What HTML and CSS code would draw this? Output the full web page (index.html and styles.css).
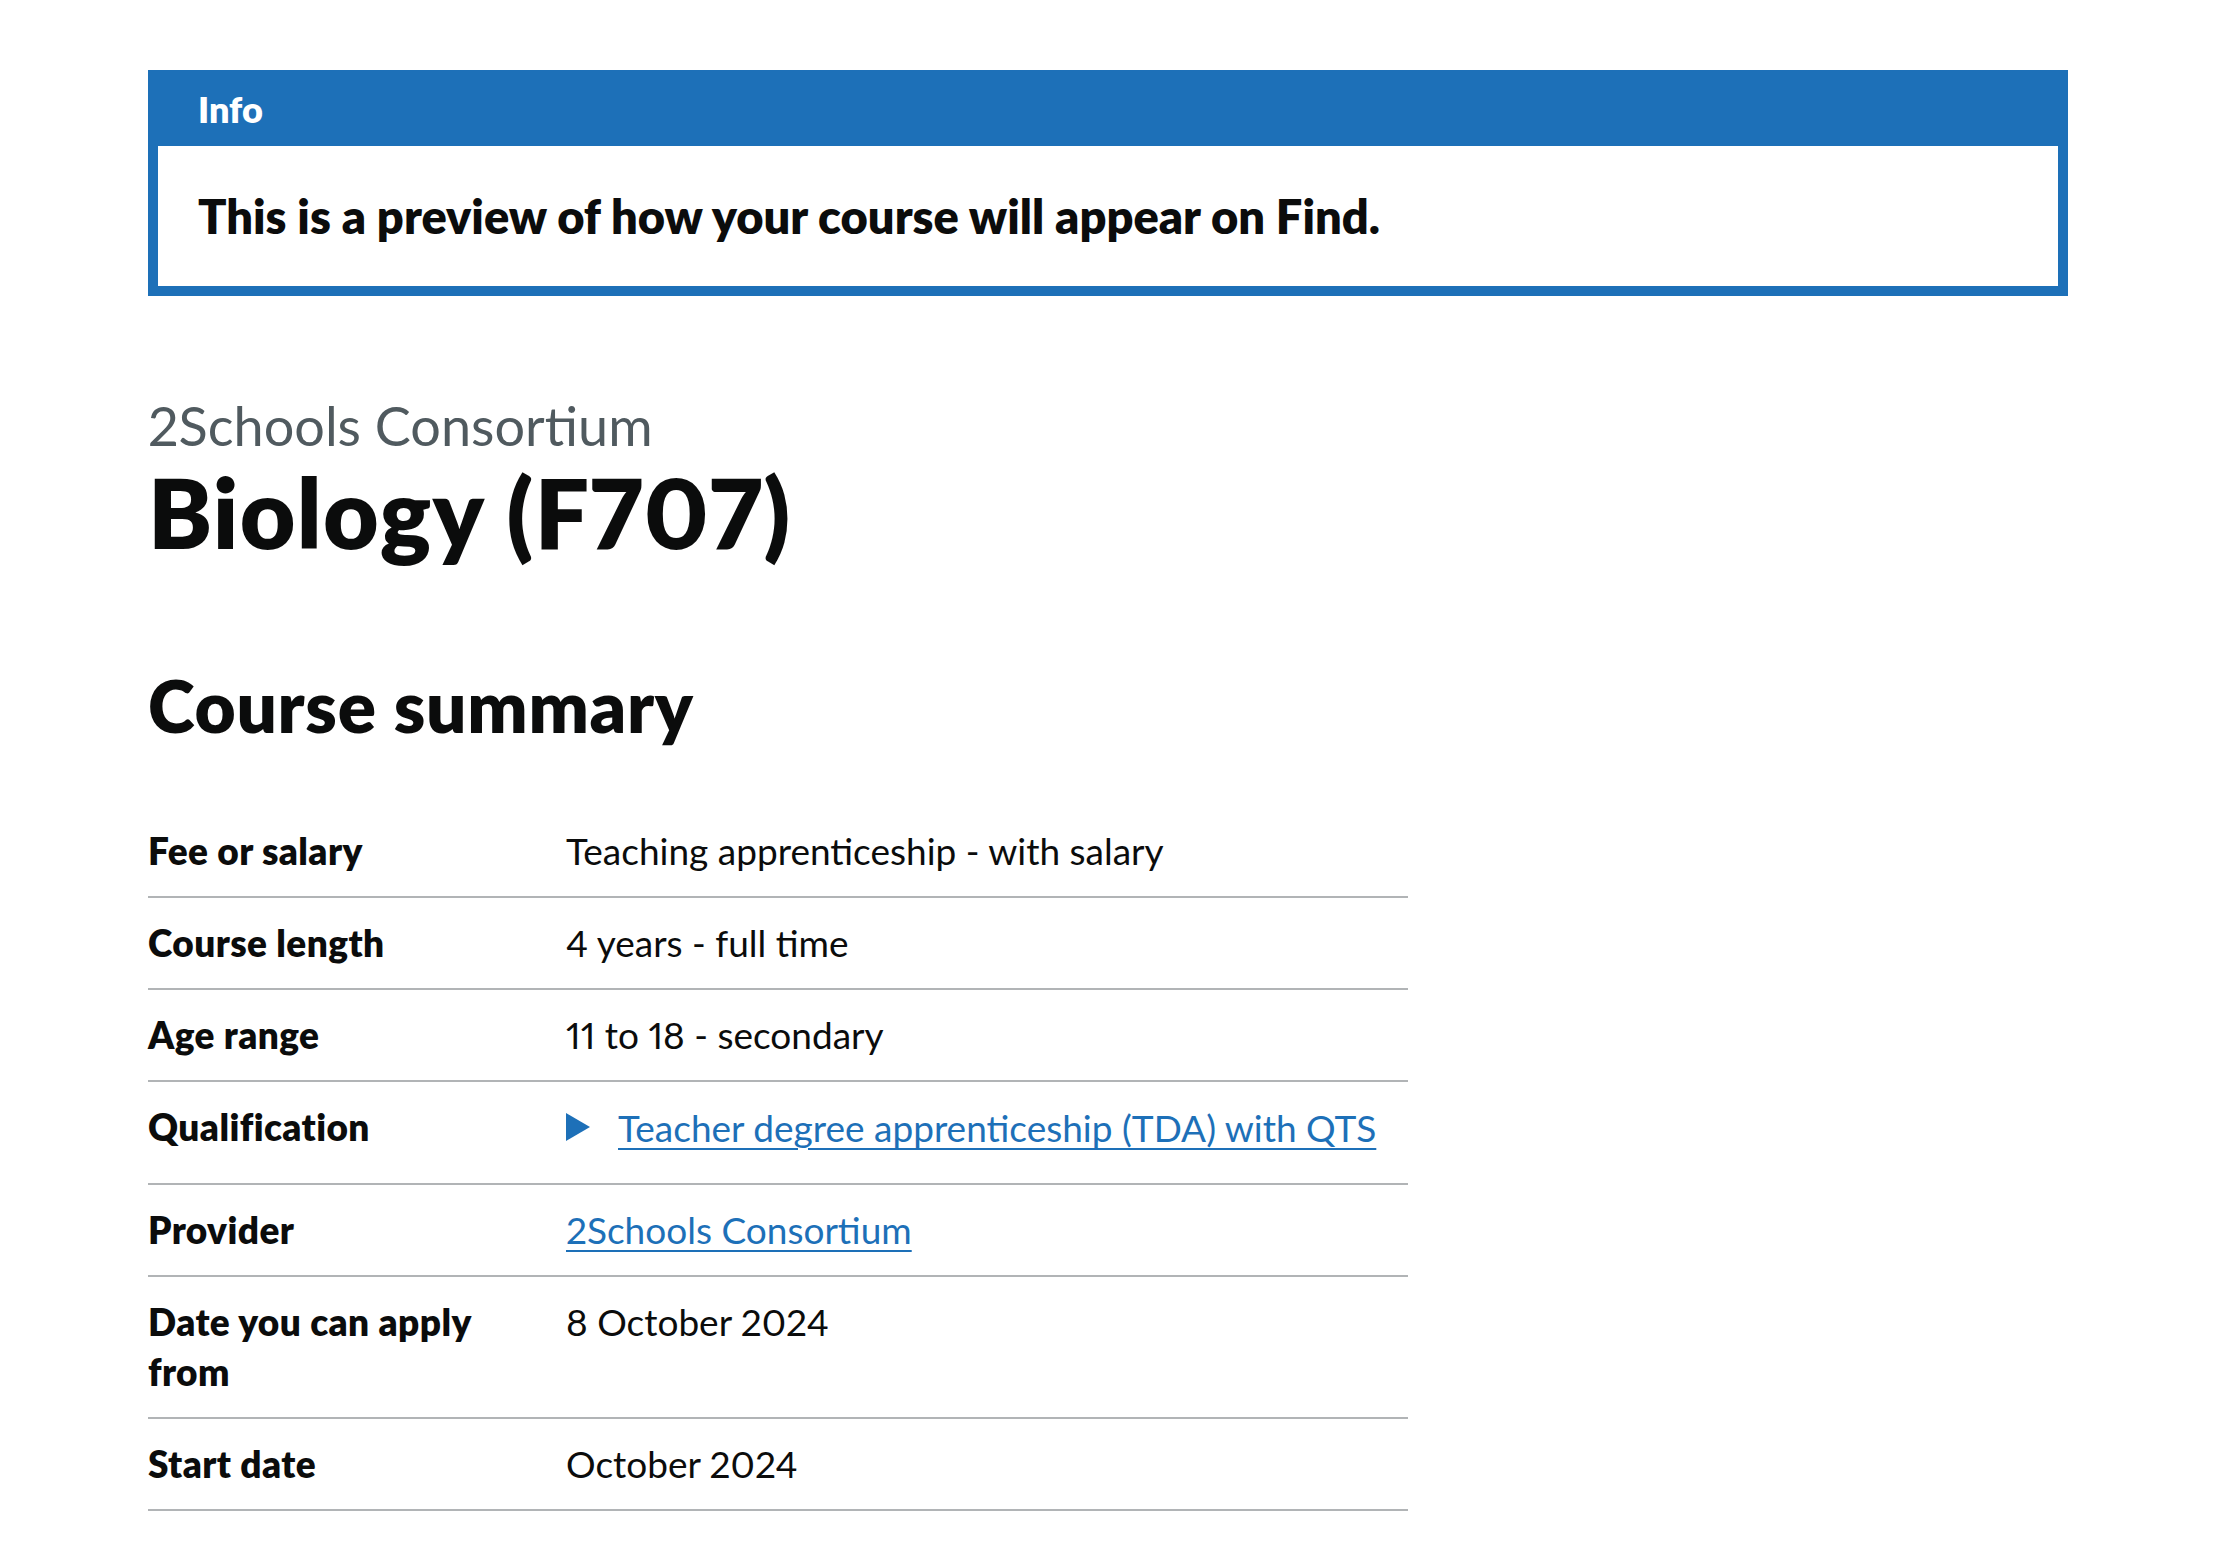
FILE: index.html
```html
<!DOCTYPE html>
<html lang="en">
<head>
<meta charset="utf-8">
<title>Biology (F707) - Preview</title>
<link rel="stylesheet" href="styles.css">
</head>
<body>
<main class="page">
  <div class="banner" role="region" aria-labelledby="banner-title">
    <div class="banner-header">
      <h2 class="banner-title" id="banner-title">Info</h2>
    </div>
    <div class="banner-content">
      <p class="banner-heading">This is a preview of how your course will appear on Find.</p>
    </div>
  </div>

  <span class="caption">2Schools Consortium</span>
  <h1 class="title">Biology (F707)</h1>

  <h2 class="section-title">Course summary</h2>

  <dl class="summary">
    <div class="row">
      <dt class="key">Fee or salary</dt>
      <dd class="value">Teaching apprenticeship - with salary</dd>
    </div>
    <div class="row">
      <dt class="key">Course length</dt>
      <dd class="value">4 years - full time</dd>
    </div>
    <div class="row">
      <dt class="key">Age range</dt>
      <dd class="value">11 to 18 - secondary</dd>
    </div>
    <div class="row">
      <dt class="key">Qualification</dt>
      <dd class="value">
        <details class="details">
          <summary class="details-summary"><span class="details-text">Teacher degree apprenticeship (TDA) with QTS</span></summary>
        </details>
      </dd>
    </div>
    <div class="row">
      <dt class="key">Provider</dt>
      <dd class="value"><a class="link" href="#">2Schools Consortium</a></dd>
    </div>
    <div class="row">
      <dt class="key">Date you can apply from</dt>
      <dd class="value">8 October 2024</dd>
    </div>
    <div class="row">
      <dt class="key">Start date</dt>
      <dd class="value">October 2024</dd>
    </div>
  </dl>
</main>
</body>
</html>
```

FILE: styles.css
```css
html, body {
  margin: 0;
  padding: 0;
  background: #ffffff;
}

body {
  font-family: Lato, "Liberation Sans", Arial, sans-serif;
  font-variant-numeric: proportional-nums;
  color: #0b0c0c;
}

.page {
  width: 1920px;
  margin: 0 148px;
  padding-top: 70px;
  padding-bottom: 60px;
}

/* Notification banner */
.banner {
  border: 10px solid #1d70b8;
  background: #1d70b8;
  margin-bottom: 100px;
}

.banner-header {
  padding: 4px 40px 12px;
}

.banner-title {
  margin: 0;
  font-size: 36px;
  line-height: 50px;
  font-weight: 800;
  color: #ffffff;
}

.banner-content {
  background: #ffffff;
  padding: 40px;
}

.banner-heading {
  margin: 0;
  font-size: 47px;
  line-height: 60px;
  font-weight: 800;
}

/* Headings */
.caption {
  display: block;
  margin-bottom: 6px;
  color: #505a5f;
  font-size: 54px;
  line-height: 60px;
}

.title {
  margin: 0 0 104px;
  font-size: 96px;
  line-height: 100px;
  font-weight: 800;
  letter-spacing: 1.3px;
}

.section-title {
  margin: 0 0 60px;
  font-size: 71px;
  line-height: 80px;
  font-weight: 800;
  letter-spacing: 0.7px;
}

/* Summary list */
.summary {
  width: 1260px;
  margin: 0;
}

.row {
  display: flex;
  border-bottom: 2px solid #b1b4b6;
}

.key,
.value {
  margin: 0;
  padding: 20px 0;
  font-size: 37px;
  line-height: 50px;
}

.key {
  width: 378px;
  flex: none;
  padding-right: 40px;
  font-weight: 800;
  letter-spacing: 0.4px;
}

.value {
  flex: 1;
}

.link {
  color: #1d70b8;
  text-decoration: underline;
  text-decoration-thickness: 2px;
  text-underline-offset: 6px;
}

/* Details */
.details {
  margin: 0;
}

.details-summary {
  display: inline-flex;
  align-items: center;
  gap: 28px;
  margin-bottom: 10px;
  color: #1d70b8;
  cursor: pointer;
  list-style: none;
}

.details-summary::-webkit-details-marker {
  display: none;
}

.details-summary::before {
  content: "";
  flex: none;
  width: 0;
  height: 0;
  border-style: solid;
  border-color: transparent;
  border-width: 14px 0 14px 24px;
  border-left-color: currentColor;
  margin-top: -2px;
}

.details-text {
  text-decoration: underline;
  text-decoration-thickness: 2px;
  text-underline-offset: 6px;
}
```
